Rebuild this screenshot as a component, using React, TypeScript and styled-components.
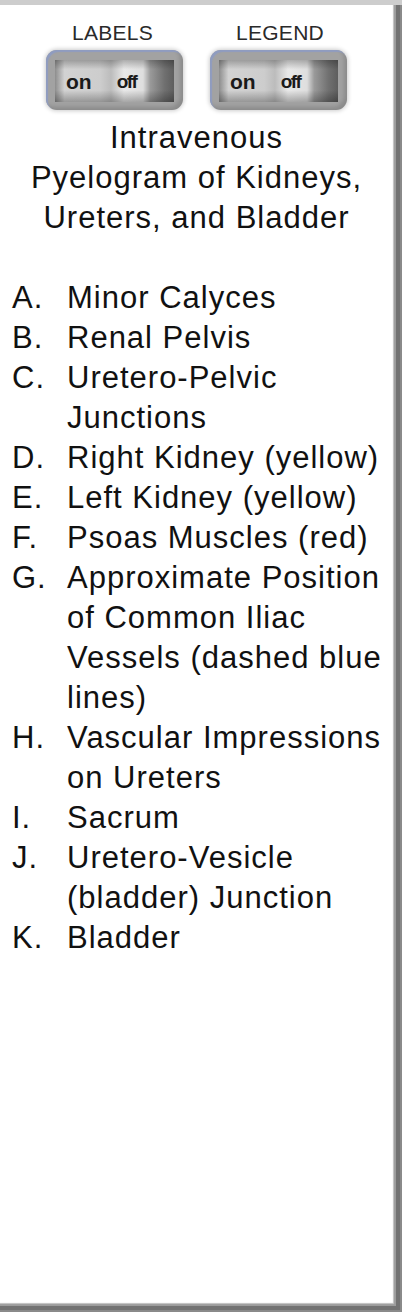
import React from 'react';
import styled, { createGlobalStyle } from 'styled-components';

const GlobalStyle = createGlobalStyle`
    html, body {
        margin: 0;
        padding: 0;
        background: #ffffff;
    }
`;

const Frame = styled.div`
    width: 402px;
    height: 1312px;
    box-sizing: border-box;
    background: #ffffff;
    border-top: 5px solid #cdcdcd;
    padding-right: 9px;
    box-shadow:
        inset -2px -2px 0 #8a8a8a,
        inset -6px -6px 0 #727272,
        inset -8px -8px 1px #9c9c9c,
        inset -9px -9px 1px #c4c4c4;
    font-family: "Liberation Sans", Arial, sans-serif;
    color: #111;
    overflow: hidden;
`;

const Controls = styled.div`
    display: flex;
    justify-content: center;
    gap: 27px;
    padding-top: 16px;
`;

const ControlColumn = styled.div`
    display: flex;
    flex-direction: column;
    align-items: center;
    width: 137px;
    gap: 5px;
`;

const ControlLabel = styled.div<{ $shift: number }>`
    font-size: 21px;
    line-height: 24px;
    letter-spacing: 0.3px;
    color: #2a2a2a;
    margin-left: ${p => p.$shift}px;
`;

const SwitchShell = styled.div`
    width: 137px;
    height: 60px;
    box-sizing: border-box;
    padding: 10px 9px 8px 9px;
    border-radius: 11px;
    background: #a2a2a2;
    box-shadow:
        0 0 4px 1px rgba(0, 0, 0, 0.2),
        inset 2px 2px 1px #8f9cc0,
        inset -3px -3px 4px rgba(0, 0, 0, 0.15);
`;

const SwitchFace = styled.div`
    height: 42px;
    display: flex;
    align-items: center;
    padding-left: 11px;
    gap: 25px;
    background:
        linear-gradient(to bottom, rgba(0, 0, 0, 0.25), rgba(0, 0, 0, 0) 22%, rgba(0, 0, 0, 0) 72%, rgba(0, 0, 0, 0.28)),
        linear-gradient(to right, #8d8d8d 0%, #d2d2d2 8%, #cdcdcd 38%, #bcbcbc 47%, #e8e8e8 58%, #dedede 74%, #9a9a9a 80%, #707070 92%, #5e5e5e 100%);
`;

const SwitchText = styled.span<{ $tight?: boolean }>`
    font-weight: bold;
    font-size: ${p => (p.$tight ? 19 : 21)}px;
    letter-spacing: ${p => (p.$tight ? -1.6 : 0)}px;
    color: #1a1a1a;
    line-height: 1;
`;

const Title = styled.h1`
    margin: 8px 0 40px 0;
    font-size: 31px;
    font-weight: normal;
    line-height: 40px;
    letter-spacing: 1px;
    text-align: center;
`;

const Legend = styled.ol`
    list-style: none;
    margin: 0;
    padding: 0 0 0 12px;
    font-size: 31px;
    line-height: 40px;
    letter-spacing: 1px;
`;

const Item = styled.li`
    display: grid;
    grid-template-columns: 55px 1fr;
`;

const Letter = styled.span``;

const Term = styled.span``;

const items: [string, string][] = [
    ['A.', 'Minor Calyces'],
    ['B.', 'Renal Pelvis'],
    ['C.', 'Uretero-Pelvic Junctions'],
    ['D.', 'Right Kidney (yellow)'],
    ['E.', 'Left Kidney (yellow)'],
    ['F.', 'Psoas Muscles (red)'],
    ['G.', 'Approximate Position of Common Iliac Vessels (dashed blue lines)'],
    ['H.', 'Vascular Impressions on Ureters'],
    ['I.', 'Sacrum'],
    ['J.', 'Uretero-Vesicle (bladder) Junction'],
    ['K.', 'Bladder'],
];

const Toggle: React.FC<{ label: string; shift: number }> = ({ label, shift }) => (
    <ControlColumn>
        <ControlLabel $shift={shift}>{label}</ControlLabel>
        <SwitchShell>
            <SwitchFace>
                <SwitchText>on</SwitchText>
                <SwitchText $tight>off</SwitchText>
            </SwitchFace>
        </SwitchShell>
    </ControlColumn>
);

const App: React.FC = () => {
    return (
        <>
            <GlobalStyle />
            <Frame>
                <Controls>
                    <Toggle label="LABELS" shift={-4} />
                    <Toggle label="LEGEND" shift={3} />
                </Controls>
                <Title>
                    Intravenous<br />
                    Pyelogram of Kidneys,<br />
                    Ureters, and Bladder
                </Title>
                <Legend>
                    {items.map(([letter, text]) => (
                        <Item key={letter}>
                            <Letter>{letter}</Letter>
                            <Term>{text}</Term>
                        </Item>
                    ))}
                </Legend>
            </Frame>
        </>
    );
};

export default App;
